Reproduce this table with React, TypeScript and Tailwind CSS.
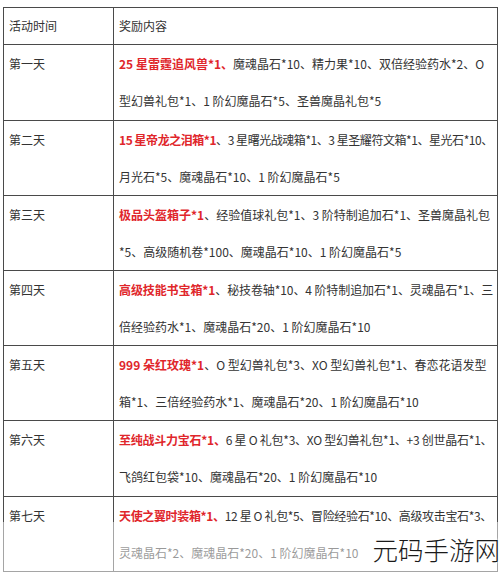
import React from 'react'

type Row = {
  day: string
  red: string
  rest: string
  line2: string
  h: string
  fit?: string
}

const ROWS: Row[] = [
  { day: '第一天', red: '25 星雷霆追风兽*1、', rest: '魔魂晶石*10、精力果*10、双倍经验药水*2、O', line2: '型幻兽礼包*1、1 阶幻魔晶石*5、圣兽魔晶礼包*5', h: 'h-[76px]' },
  { day: '第二天', red: '15 星帝龙之泪箱*1', rest: '、3 星曙光战魂箱*1、3 星圣耀符文箱*1、星光石*10、', line2: '月光石*5、魔魂晶石*10、1 阶幻魔晶石*5', h: 'h-[75px]', fit: 'tracking-[-0.45px]' },
  { day: '第三天', red: '极品头盔箱子*1', rest: '、经验值球礼包*1、3 阶特制追加石*1、圣兽魔晶礼包', line2: '*5、高级随机卷*100、魔魂晶石*10、1 阶幻魔晶石*5', h: 'h-[75px]' },
  { day: '第四天', red: '高级技能书宝箱*1', rest: '、秘技卷轴*10、4 阶特制追加石*1、灵魂晶石*1、三', line2: '倍经验药水*1、魔魂晶石*20、1 阶幻魔晶石*10', h: 'h-[75px]', fit: 'tracking-[-0.1px]' },
  { day: '第五天', red: '999 朵红玫瑰*1', rest: '、O 型幻兽礼包*3、XO 型幻兽礼包*1、春恋花语发型', line2: '箱*1、三倍经验药水*1、魔魂晶石*20、1 阶幻魔晶石*10', h: 'h-[75px]' },
  { day: '第六天', red: '至纯战斗力宝石*1、', rest: '6 星 O 礼包*3、XO 型幻兽礼包*1、+3 创世晶石*1、', line2: '飞鸽红包袋*10、魔魂晶石*20、1 阶幻魔晶石*10', h: 'h-[76px]', fit: 'tracking-[-0.25px]' },
  { day: '第七天', red: '天使之翼时装箱*1、', rest: '12 星 O 礼包*5、冒险经验石*10、高级攻击宝石*3、', line2: '灵魂晶石*2、魔魂晶石*20、1 阶幻魔晶石*10', h: 'h-[75px]', fit: 'tracking-[-0.35px]' },
]

export default function App() {
  return (
    <div
      className="relative w-[500px] h-[572px] overflow-hidden bg-white pt-[7px] pl-[3px] text-[12px] text-[#333]"
      style={{ fontFamily: '"Noto Sans CJK SC", "Noto Sans", sans-serif' }}
    >
      <div className="w-[495px] border border-[#4a4a4a]">
        {/* header */}
        <div className="flex h-[36px]">
          <div className="w-[110px] shrink-0 border-r border-[#4a4a4a] pl-[5px] flex items-center">活动时间</div>
          <div className="flex-1 pl-[5px] flex items-center">奖励内容</div>
        </div>

        {ROWS.map(r => (
          <div key={r.day} className={`flex border-t border-[#4a4a4a] ${r.h}`}>
            <div className="w-[110px] shrink-0 border-r border-[#4a4a4a] pl-[5px] leading-[37px]">{r.day}</div>
            <div className="flex-1 pl-[5px] leading-[37px] whitespace-nowrap overflow-hidden">
              <div className={r.fit}>
                <span className="font-bold text-[#e0262b]">{r.red}</span>
                <span>{r.rest}</span>
              </div>
              <div>{r.line2}</div>
            </div>
          </div>
        ))}
      </div>

      {/* faded bottom of the capture */}
      <div className="absolute left-0 right-0 top-[522px] bottom-0 bg-white/50" />

      {/* watermark */}
      <div
        className="absolute right-0 top-[533px] text-[25.5px] leading-[32px] font-light text-[#1a1a1a]"
        style={{ textShadow: '0 0 3px #fff, 0 0 3px #fff' }}
      >
        元码手游网
      </div>
    </div>
  )
}
